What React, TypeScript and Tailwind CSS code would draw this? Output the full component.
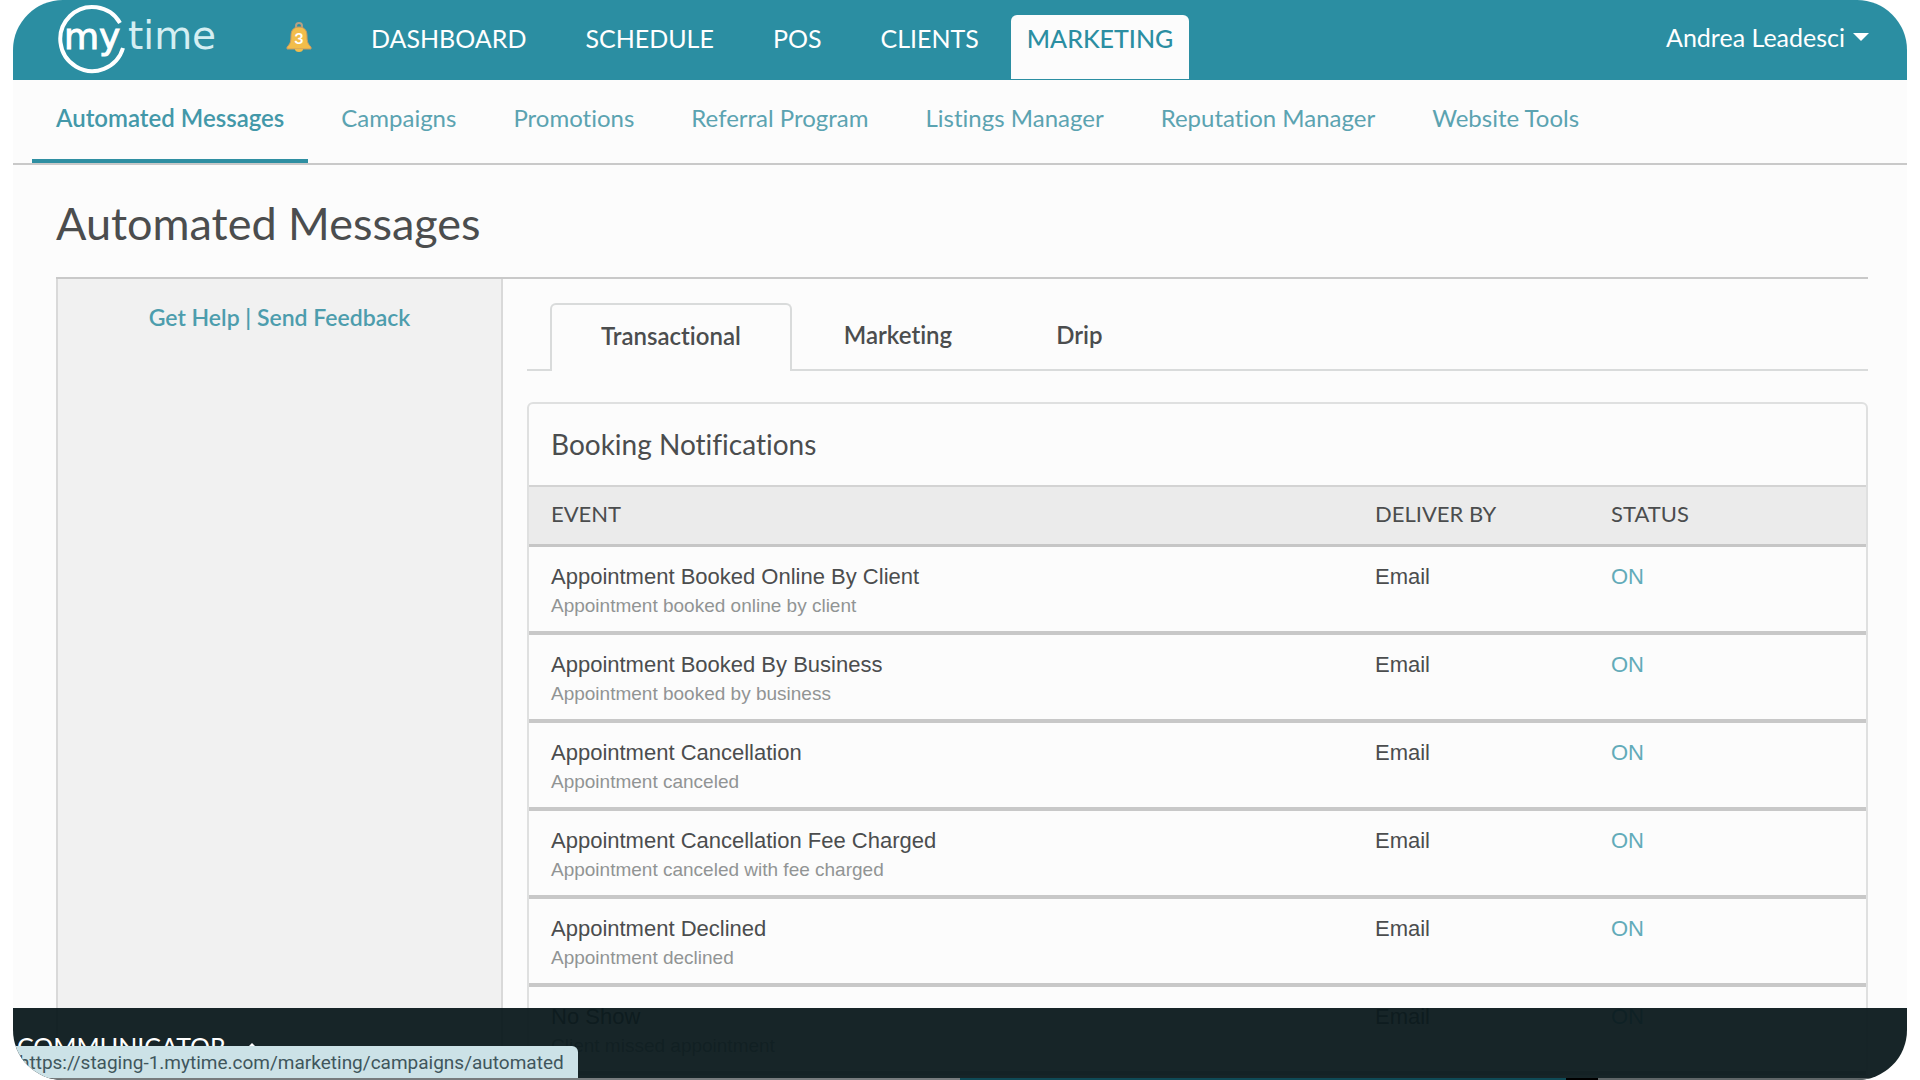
import { clsx } from 'clsx';

const mainNav = ['DASHBOARD', 'SCHEDULE', 'POS', 'CLIENTS'];

const subNav = [
    'Automated Messages',
    'Campaigns',
    'Promotions',
    'Referral Program',
    'Listings Manager',
    'Reputation Manager',
    'Website Tools',
];

const tabs = ['Transactional', 'Marketing', 'Drip'];

const notifications = [
    { title: 'Appointment Booked Online By Client', description: 'Appointment booked online by client' },
    { title: 'Appointment Booked By Business', description: 'Appointment booked by business' },
    { title: 'Appointment Cancellation', description: 'Appointment canceled' },
    { title: 'Appointment Cancellation Fee Charged', description: 'Appointment canceled with fee charged' },
    { title: 'Appointment Declined', description: 'Appointment declined' },
    { title: 'No Show', description: 'Client missed appointment' },
];

function Logo() {
    return (
        <svg width="164" height="72" viewBox="0 0 164 72" role="img" aria-label="mytime">
            <path d="M63 19 A32 32 0 1 0 66 44" fill="none" stroke="#fff" strokeWidth="4" />
            <text x="7" y="45" fill="#fff" stroke="#fff" strokeWidth="1" fontFamily="'DejaVu Sans', sans-serif" fontSize="36">my</text>
            <text x="71" y="45" fill="#d5eef2" fontFamily="'DejaVu Sans', sans-serif" fontSize="39">time</text>
        </svg>
    );
}

function BellIcon() {
    return (
        <svg width="28" height="32" viewBox="0 0 28 32" aria-hidden="true">
            <circle cx="14" cy="4" r="3" fill="none" stroke="#b5a184" strokeWidth="2" />
            <path d="M14 5 C8 5 6 9 6 14 C6 20 5 22 2 25 L2 27 H26 V25 C23 22 22 20 22 14 C22 9 20 5 14 5 Z" fill="#f2bd4b" stroke="#c99a63" />
            <path d="M10 27 a4 3 0 0 0 8 0 Z" fill="#f2bd4b" />
            <text x="14" y="22" textAnchor="middle" fill="#fff" fontFamily="Lato, sans-serif" fontSize="16" fontWeight="700">3</text>
        </svg>
    );
}

export default function App() {
    return (
        <div className="h-screen bg-white px-[13px] font-[Lato,sans-serif] text-[#4b4d4e] [font-variant-ligatures:none]">
            <div className="relative flex h-full flex-col overflow-hidden rounded-[50px] bg-[#fcfcfc]">
                {/* Top bar */}
                <header className="flex h-20 shrink-0 items-start bg-[#2b8ea2] pl-11 pr-[38px] text-[25px] leading-8 text-white">
                    <a href="#" className="mt-1 w-[164px]">
                        <Logo />
                    </a>
                    <button type="button" className="ml-16 mt-[22px]" aria-label="3 notifications">
                        <BellIcon />
                    </button>
                    <nav className="ml-[58px] flex">
                        <div className="mt-[22px] flex gap-[59px]">
                            {mainNav.map((item) => (
                                <a key={item} href="#">{item}</a>
                            ))}
                        </div>
                        <a href="#" className="ml-8 mt-[15px] h-16 rounded-t-md bg-[#fcfcfc] px-4 pt-[7px] font-medium text-[#2b8ea2]">
                            MARKETING
                        </a>
                    </nav>
                    <button type="button" className="ml-auto mt-[21px] flex items-center gap-2">
                        Andrea Leadesci
                        <span className="border-x-8 border-t-8 border-x-transparent border-t-white" />
                    </button>
                </header>

                {/* Section navigation */}
                <nav className="flex h-[85px] shrink-0 gap-[9px] border-b-2 border-[#c9c9c9] pl-[19px] text-2xl leading-8 text-[#5ba3b1]">
                    {subNav.map((item, i) => (
                        <a
                            key={item}
                            href="#"
                            className={clsx('px-6 pt-[22px]', i === 0 && 'border-b-4 border-[#2f8fa2] font-semibold text-[#4398a9]')}
                        >
                            {item}
                        </a>
                    ))}
                </nav>

                <main className="flex min-h-0 grow flex-col pl-[43px] pr-[39px]">
                    <h1 className="pb-7 pt-8 text-[45px] leading-[52px]">Automated Messages</h1>
                    <div className="flex min-h-0 grow border-t-2 border-[#c9c9c9]">
                        <aside className="w-[447px] shrink-0 border-x-2 border-[#d9d9d9] bg-[#f1f1f1] pt-6 text-center text-[23px] font-semibold leading-7 text-[#4d9dad]">
                            <a href="#">Get Help</a> | <a href="#">Send Feedback</a>
                        </aside>

                        <section className="grow pl-6 pt-6">
                            <div className="flex border-b-2 border-[#d9dbdb] pl-[23px] text-2xl font-semibold leading-7" role="tablist">
                                {tabs.map((tab, i) => (
                                    <button
                                        key={tab}
                                        type="button"
                                        role="tab"
                                        aria-selected={i === 0}
                                        className={clsx(
                                            '-mb-0.5 h-[68px] pb-1',
                                            i === 0 ? 'rounded-t-md border-2 border-b-0 border-[#d9dbdb] bg-[#fcfcfc] px-[49px]' : 'px-[52px]',
                                        )}
                                    >
                                        {tab}
                                    </button>
                                ))}
                            </div>

                            <div className="mt-[31px] rounded-t-md border-2 border-[#dfe0e0]">
                                <h2 className="px-[22px] pb-[25px] pt-6 text-[28px] leading-8">Booking Notifications</h2>
                                <table className="w-full table-fixed border-collapse text-left font-['Liberation_Sans',sans-serif]">
                                    <thead className="border-b-3 border-t-2 border-b-[#c6c6c6] border-t-[#d3d3d3] bg-[#ebebeb] font-[Lato,sans-serif] text-[22px]">
                                        <tr className="h-[59px]">
                                            <th className="pb-1 pl-[22px] font-normal">EVENT</th>
                                            <th className="w-[236px] pb-1 font-normal">DELIVER BY</th>
                                            <th className="w-[255px] pb-1 font-normal">STATUS</th>
                                        </tr>
                                    </thead>
                                    <tbody>
                                        {notifications.map((row) => (
                                            <tr key={row.title} className="h-[88px] border-b-4 border-[#c8c8c8] align-top text-[22px] leading-[29px]">
                                                <td className="pl-[22px] pt-[15px]">
                                                    {row.title}
                                                    <div className="text-[19px] leading-[29px] text-[#919494]">{row.description}</div>
                                                </td>
                                                <td className="pt-[15px]">Email</td>
                                                <td className="pt-[15px]">
                                                    <a href="#" className="text-[#62abb9]">ON</a>
                                                </td>
                                            </tr>
                                        ))}
                                    </tbody>
                                </table>
                            </div>
                        </section>
                    </div>
                </main>

                {/* Communicator dock */}
                <footer className="absolute inset-x-0 bottom-0 flex h-[72px] flex-col justify-between bg-[#0b191c]/95">
                    <button type="button" className="flex items-center gap-5 pl-1 pt-[22px] text-[25px] leading-8 text-white">
                        COMMUNICATOR
                        <span className="border-x-6 border-b-6 border-x-transparent border-b-white" />
                    </button>
                    <div className="flex h-0.5">
                        <div className="w-1/2 bg-[#777c7e]" />
                        <div className="w-8/25 bg-[#0f4a56]" />
                        <div className="w-8 bg-black" />
                        <div className="grow bg-[#5f6668]" />
                    </div>
                    <div className="absolute bottom-0.5 left-0 h-8 rounded-tr-md bg-[#cce2e7] pl-1.5 pr-[14px] font-[Roboto,sans-serif] text-[19px] leading-[34px] text-[#40565c]">
                        https://staging-1.mytime.com/marketing/campaigns/automated
                    </div>
                </footer>
            </div>
        </div>
    );
}
